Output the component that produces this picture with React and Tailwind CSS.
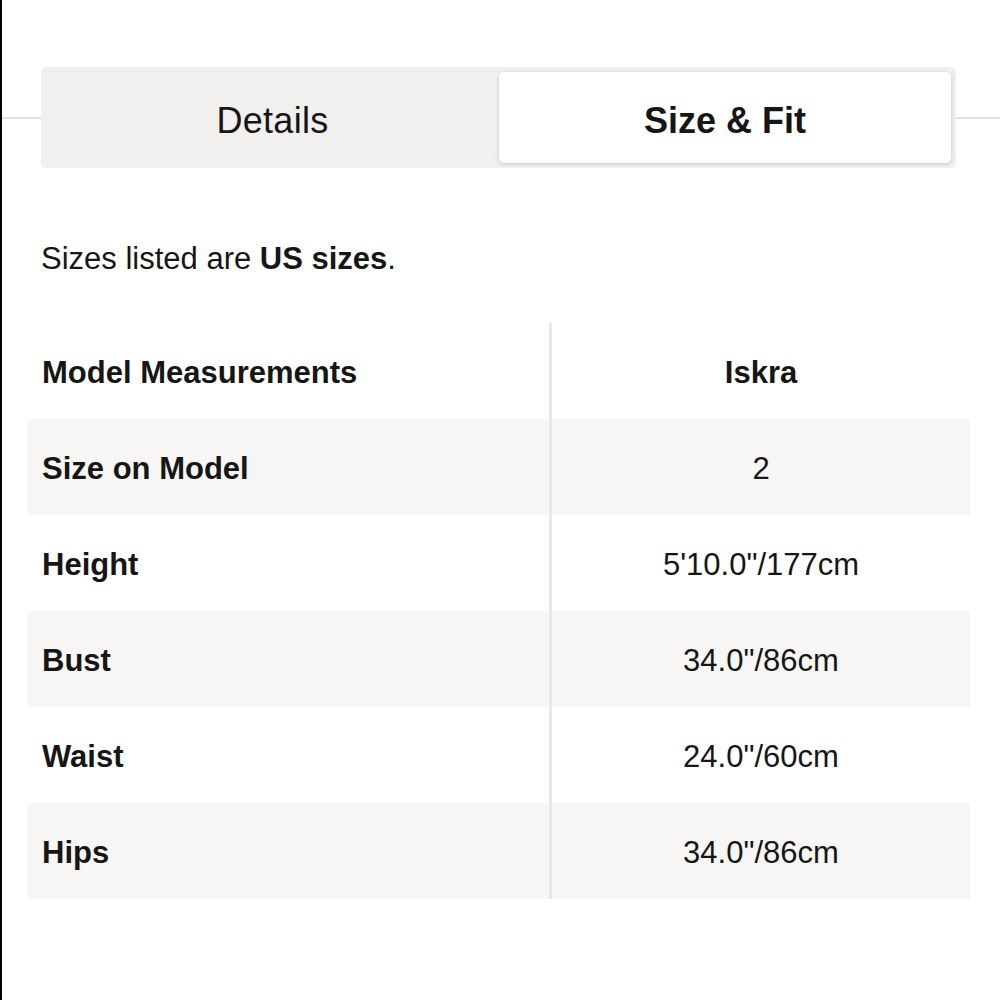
import React from "react";

const rows = [
  { label: "Size on Model", value: "2" },
  { label: "Height", value: "5'10.0\"/177cm" },
  { label: "Bust", value: "34.0\"/86cm" },
  { label: "Waist", value: "24.0\"/60cm" },
  { label: "Hips", value: "34.0\"/86cm" },
];

const App = () => {
  return (
    <div
      className="w-full h-[1000px] bg-white border-l-2 border-black text-[#161616]"
      style={{ fontFamily: '"Liberation Sans", Arial, sans-serif' }}
    >
      {/* Tabs */}
      <div className="flex items-center pt-[67px]">
        <div className="w-[39px] h-[2px] bg-[#e2e2e2]" />
        <div className="w-[915px] h-[101px] bg-[#f1f0ef] rounded-[5px] p-[5px] flex">
          <div className="flex-1 flex items-center justify-center pt-[6px] text-[36px] tracking-[0.3px]">
            Details
          </div>
          <div className="w-[452px] bg-white rounded-[5px] shadow-[0_1px_4px_rgba(0,0,0,0.18)] flex items-center justify-center pt-[6px] text-[36px] font-bold">
            Size &amp; Fit
          </div>
        </div>
        <div className="flex-1 h-[2px] bg-[#e2e2e2]" />
      </div>

      {/* Note */}
      <p className="mt-[73px] pl-[39px] text-[31px] leading-[36px]">
        Sizes listed are <span className="font-bold">US sizes</span>.
      </p>

      {/* Table */}
      <div className="mt-[46px] ml-[25px] w-[943px] text-[31px]">
        <div className="flex h-[96px]">
          <div className="w-[525px] border-r-[3px] border-[#ebe7e4] flex items-center pl-[15px] pt-[4px] font-bold">
            Model Measurements
          </div>
          <div className="flex-1 flex items-center justify-center pt-[4px] font-bold">
            Iskra
          </div>
        </div>
        {rows.map((row, i) => (
          <div
            key={row.label}
            className={`flex h-[96px] ${i % 2 === 0 ? "bg-[#f7f6f5]" : "bg-white"}`}
          >
            <div className="w-[525px] border-r-[3px] border-[#ebe7e4] flex items-center pl-[15px] pt-[4px] font-bold">
              {row.label}
            </div>
            <div className="flex-1 flex items-center justify-center pt-[4px]">
              {row.value}
            </div>
          </div>
        ))}
      </div>
    </div>
  );
};

export default App;
